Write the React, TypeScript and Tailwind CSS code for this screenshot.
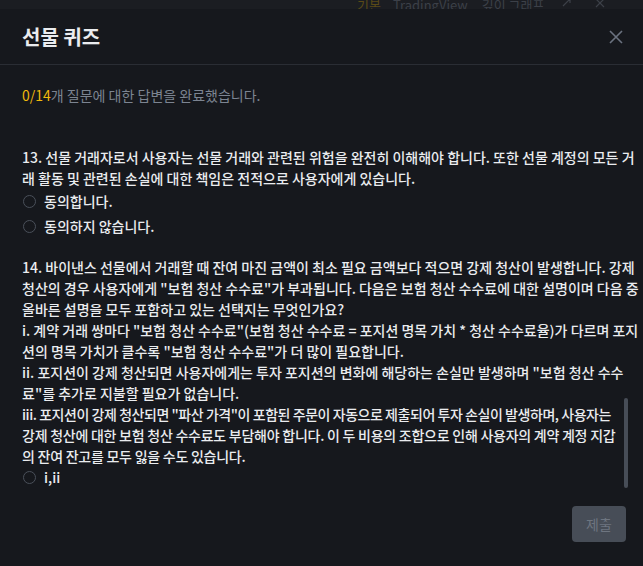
import React from "react";

const FONT = "font-['Noto_Sans_CJK_KR',_'Noto_Sans',_sans-serif]";

function Radio({ label }: { label: string }) {
  return (
    <div className="flex items-center h-[25px]">
      <span className="w-[13px] h-[13px] rounded-full border border-[#4a505a] ml-[1px]" />
      <span className="ml-[8px] text-[14px] leading-[21px] font-medium text-[#eaecef]">{label}</span>
    </div>
  );
}

function Lines({ lines, className = "", firstClass = "" }: { lines: string[]; className?: string; firstClass?: string }) {
  return (
    <div className={"text-[14px] leading-[21px] font-medium text-[#eaecef] " + className}>
      {lines.map((l, i) => (
        <div key={i} className={"whitespace-nowrap " + (i === 0 ? firstClass : "")}>
          {l}
        </div>
      ))}
    </div>
  );
}

export default function App() {
  return (
    <div className={"w-[643px] h-[566px] bg-[#1b1d22] overflow-hidden flex flex-col " + FONT}>
      {/* dimmed background strip */}
      <div className="h-[9px] shrink-0 overflow-hidden text-[13px] leading-[20px] text-[#3c4048]">
        <div className="flex items-start mt-[-5px] whitespace-nowrap">
          <span className="shrink-0 ml-[357px] text-[#5a4a17]">기본</span>
          <span className="shrink-0 ml-[12px]">TradingView</span>
          <span className="shrink-0 ml-[14px]">깊이 그래프</span>
          <svg className="shrink-0 ml-[16px] mt-[2px]" width="12" height="12" viewBox="0 0 12 12" fill="none">
            <path d="M3 9L10 2M6 2h4v4" stroke="#3c4048" strokeWidth="1.2" />
          </svg>
          <svg className="shrink-0 ml-[22px] mt-[2px]" width="12" height="12" viewBox="0 0 12 12" fill="none">
            <path d="M2 2L10 10M10 2L2 10" stroke="#3c4048" strokeWidth="1.2" />
          </svg>
        </div>
      </div>

      {/* modal */}
      <div className="flex-1 bg-[#16181d] flex flex-col">
        <div className="h-[56px] shrink-0 flex items-center justify-between pl-[22px] pr-[19px] border-b border-[#2a2d34]">
          <span className="text-[20px] font-bold text-[#eaecef] leading-[28px]">선물 퀴즈</span>
          <svg width="16" height="16" viewBox="0 0 16 16" fill="none">
            <path d="M2 2L14 14M14 2L2 14" stroke="#6b7280" strokeWidth="1.6" />
          </svg>
        </div>

        <div className="pl-[22px] mt-[20px] text-[14px] leading-[21px] text-[#7c8491]">
          <span className="text-[#f0b90b]">0/14</span>개 질문에 대한 답변을 완료했습니다.
        </div>

        <div className="relative mt-[13px] h-[371px] overflow-hidden pl-[22px] pt-[28px]">
          <Lines
            lines={[
              "13. 선물 거래자로서 사용자는 선물 거래와 관련된 위험을 완전히 이해해야 합니다. 또한 선물 계정의 모든 거",
              "래 활동 및 관련된 손실에 대한 책임은 전적으로 사용자에게 있습니다.",
            ]}
          />
          <Radio label="동의합니다." />
          <Radio label="동의하지 않습니다." />

          <Lines
            className="mt-[18px]"
            lines={[
              "14. 바이낸스 선물에서 거래할 때 잔여 마진 금액이 최소 필요 금액보다 적으면 강제 청산이 발생합니다. 강제",
              "청산의 경우 사용자에게 \"보험 청산 수수료\"가 부과됩니다. 다음은 보험 청산 수수료에 대한 설명이며 다음 중",
              "올바른 설명을 모두 포함하고 있는 선택지는 무엇인가요?",
            ]}
          />
          <Lines
            lines={[
              "i. 계약 거래 쌍마다 \"보험 청산 수수료\"(보험 청산 수수료 = 포지션 명목 가치 * 청산 수수료율)가 다르며 포지",
              "션의 명목 가치가 클수록 \"보험 청산 수수료\"가 더 많이 필요합니다.",
            ]}
          />
          <Lines
            lines={[
              "ii. 포지션이 강제 청산되면 사용자에게는 투자 포지션의 변화에 해당하는 손실만 발생하며 \"보험 청산 수수",
              "료\"를 추가로 지불할 필요가 없습니다.",
            ]}
          />
          <Lines
            className="tracking-[-0.25px]"
            firstClass="tracking-[-0.45px]"
            lines={[
              "iii. 포지션이 강제 청산되면 \"파산 가격\"이 포함된 주문이 자동으로 제출되어 투자 손실이 발생하며, 사용자는",
              "강제 청산에 대한 보험 청산 수수료도 부담해야 합니다. 이 두 비용의 조합으로 인해 사용자의 계약 계정 지갑",
              "의 잔여 잔고를 모두 잃을 수도 있습니다.",
            ]}
          />
          <div className="-mt-[2px]">
            <Radio label="i,ii" />
          </div>
          <Radio label="i,iii" />

          <div className="absolute right-[15px] bottom-[2px] w-[4px] h-[90px] rounded-full bg-[#474d57]" />
        </div>

        <div className="flex justify-end pr-[17px] mt-[16px]">
          <button className="w-[54px] h-[36px] rounded-[4px] bg-[#474d57] text-[14px] text-[#6e7580]">
            제출
          </button>
        </div>
      </div>
    </div>
  );
}
